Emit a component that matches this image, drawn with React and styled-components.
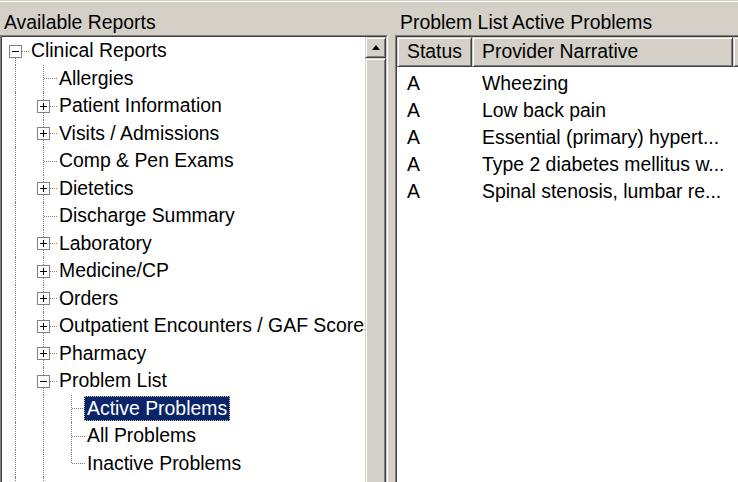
import React from 'react';
import styled, { createGlobalStyle, css } from 'styled-components';

const GlobalStyle = createGlobalStyle`
  html, body {
    margin: 0;
    padding: 0;
    background: #d4d0c8;
    overflow: hidden;
  }
`;

const FONT = `"Liberation Sans", Arial, sans-serif`;

const Frame = styled.div`
  width: 738px;
  height: 482px;
  overflow: hidden;
  background: #d4d0c8;
  padding-top: 1px;
  box-sizing: border-box;
  font-family: ${FONT};
  font-size: 19.4px;
  color: #000;
`;

const TopEdge = styled.div`
  height: 0;
  border-top: 1px solid #fff;
  width: 760px;
`;

const Panes = styled.div`
  display: flex;
  gap: 7px;
  width: 760px;
`;

const Pane = styled.div`
  display: flex;
  flex-direction: column;
  width: ${p => p.$width}px;
  flex: none;
`;

const PaneLabel = styled.div`
  height: 33px;
  box-sizing: border-box;
  padding-top: 9px;
  padding-left: ${p => p.$indent}px;
  line-height: 22px;
  white-space: nowrap;
`;

// sunken 3D frame, two pixel rings
const Sunken = styled.div`
  border: 1px solid;
  border-color: #808080 #fff #fff #808080;
  height: 460px;
`;

const Well = styled.div`
  border: 1px solid;
  border-color: #404040 #d4d0c8 #d4d0c8 #404040;
  height: 100%;
  box-sizing: border-box;
  display: flex;
  flex-direction: ${p => (p.$column ? 'column' : 'row')};
  background: #fff;
  overflow: hidden;
`;

const raised = css`
  background: #d4d0c8;
  border: 1px solid;
  border-color: #d4d0c8 #404040 #404040 #d4d0c8;
  box-shadow: inset 1px 1px #fff, inset -1px -1px #808080;
  box-sizing: border-box;
`;

/* ---------- tree ---------- */

const Tree = styled.div`
  flex: 1;
  overflow: hidden;
  background: #fff;
  display: flex;
  flex-direction: column;
`;

const TreeRow = styled.div`
  height: 27.5px;
  flex: ${p => (p.$fill ? '1' : 'none')};
  display: flex;
  align-items: center;
  white-space: nowrap;
`;

const Guide = styled.div`
  position: relative;
  width: 28px;
  height: 100%;
  flex: none;

  ${p => p.$line !== 'none' && css`
    &::before {
      content: '';
      position: absolute;
      left: 13px;
      border-left: 1px dotted #808080;
      top: ${p.$line === 'bottom' ? '50%' : '0'};
      bottom: ${p.$line === 'top' ? '50%' : '0'};
    }
  `}

  ${p => p.$joint && css`
    &::after {
      content: '';
      position: absolute;
      left: 14px;
      right: 1px;
      top: 50%;
      border-top: 1px dotted #808080;
    }
  `}
`;

const Expander = styled.div`
  position: absolute;
  z-index: 1;
  left: 7px;
  top: calc(50% - 6px);
  width: 13px;
  height: 13px;
  box-sizing: border-box;
  border: 1px solid #808080;
  background: #fff;

  &::before, &::after {
    content: '';
    position: absolute;
    background: #000;
  }
  &::before {
    left: 2px;
    right: 2px;
    top: 5px;
    height: 1px;
  }
  &::after {
    display: ${p => (p.$open ? 'none' : 'block')};
    top: 2px;
    bottom: 2px;
    left: 5px;
    width: 1px;
  }
`;

const NodeLabel = styled.span`
  height: 25px;
  line-height: 23px;
  box-sizing: border-box;
  padding: 0 2px;
  margin-left: -2px;
  border: 1px solid transparent;

  ${p => p.$selected && css`
    background: #0a246a;
    color: #fff;
    border: 1px dotted #d8c98a;
  `}
`;

/* ---------- scrollbar ---------- */

const ScrollBar = styled.div`
  width: 21px;
  flex: none;
  display: flex;
  flex-direction: column;
  background: #d4d0c8;
`;

const ScrollButton = styled.div`
  ${raised};
  height: 21px;
  flex: none;
  display: flex;
  align-items: center;
  justify-content: center;
`;

const UpArrow = styled.span`
  width: 0;
  height: 0;
  border-left: 4.5px solid transparent;
  border-right: 4.5px solid transparent;
  border-bottom: 5px solid #000;
  margin-top: -1px;
`;

const Thumb = styled.div`
  ${raised};
  flex: 1;
`;

/* ---------- list view ---------- */

const HeaderRow = styled.div`
  display: flex;
  height: 30px;
  flex: none;
`;

const HeaderCell = styled.div`
  ${raised};
  width: ${p => p.$width}px;
  flex: ${p => (p.$width ? 'none' : '1')};
  padding-left: 9px;
  line-height: 27px;
  white-space: nowrap;
`;

const ListBody = styled.div`
  padding-top: 3px;
`;

const ListRow = styled.div`
  display: flex;
  height: 27px;
  line-height: 27px;
  white-space: nowrap;
`;

const Cell = styled.div`
  width: ${p => p.$width}px;
  flex: none;
  padding-left: 10px;
  box-sizing: border-box;
`;

// guides: one entry per ancestor column, true = line keeps going
const treeRows = [
  { label: 'Clinical Reports', guides: [], line: 'bottom', box: 'open' },
  { label: 'Allergies', guides: [true], line: 'full' },
  { label: 'Patient Information', guides: [true], line: 'full', box: 'closed' },
  { label: 'Visits / Admissions', guides: [true], line: 'full', box: 'closed' },
  { label: 'Comp & Pen Exams', guides: [true], line: 'full' },
  { label: 'Dietetics', guides: [true], line: 'full', box: 'closed' },
  { label: 'Discharge Summary', guides: [true], line: 'full' },
  { label: 'Laboratory', guides: [true], line: 'full', box: 'closed' },
  { label: 'Medicine/CP', guides: [true], line: 'full', box: 'closed' },
  { label: 'Orders', guides: [true], line: 'full', box: 'closed' },
  { label: 'Outpatient Encounters / GAF Scores', guides: [true], line: 'full', box: 'closed' },
  { label: 'Pharmacy', guides: [true], line: 'full', box: 'closed' },
  { label: 'Problem List', guides: [true], line: 'full', box: 'open' },
  { label: 'Active Problems', guides: [true, true], line: 'full', selected: true },
  { label: 'All Problems', guides: [true, true], line: 'full' },
  { label: 'Inactive Problems', guides: [true, true], line: 'top' },
];

const problems = [
  'Wheezing',
  'Low back pain',
  'Essential (primary) hypert...',
  'Type 2 diabetes mellitus w...',
  'Spinal stenosis, lumbar re...',
];

const TreeNode = ({ node }) => (
  <TreeRow>
    {node.guides.map((on, i) => (
      <Guide key={i} $line={on ? 'full' : 'none'} />
    ))}
    <Guide $line={node.line} $joint>
      {node.box && <Expander $open={node.box === 'open'} />}
    </Guide>
    <NodeLabel $selected={node.selected}>{node.label}</NodeLabel>
  </TreeRow>
);

const App = () => (
  <Frame>
    <GlobalStyle />
    <TopEdge />
    <Panes>
      <Pane $width={388}>
        <PaneLabel $indent={4}>Available Reports</PaneLabel>
        <Sunken>
          <Well>
            <Tree>
              {treeRows.map(node => (
                <TreeNode key={node.label} node={node} />
              ))}
              {/* rest of the tree scrolled out of view: lines keep running */}
              <TreeRow $fill>
                <Guide $line="full" />
                <Guide $line="full" />
              </TreeRow>
            </Tree>
            <ScrollBar>
              <ScrollButton>
                <UpArrow />
              </ScrollButton>
              <Thumb />
            </ScrollBar>
          </Well>
        </Sunken>
      </Pane>
      <Pane $width={365}>
        <PaneLabel $indent={5}>Problem List Active Problems</PaneLabel>
        <Sunken>
          <Well $column>
            <HeaderRow>
              <HeaderCell $width={75}>Status</HeaderCell>
              <HeaderCell $width={261}>Provider Narrative</HeaderCell>
              <HeaderCell />
            </HeaderRow>
            <ListBody>
              {problems.map(text => (
                <ListRow key={text}>
                  <Cell $width={75}>A</Cell>
                  <Cell $width={261}>{text}</Cell>
                </ListRow>
              ))}
            </ListBody>
          </Well>
        </Sunken>
      </Pane>
    </Panes>
  </Frame>
);

export default App;
